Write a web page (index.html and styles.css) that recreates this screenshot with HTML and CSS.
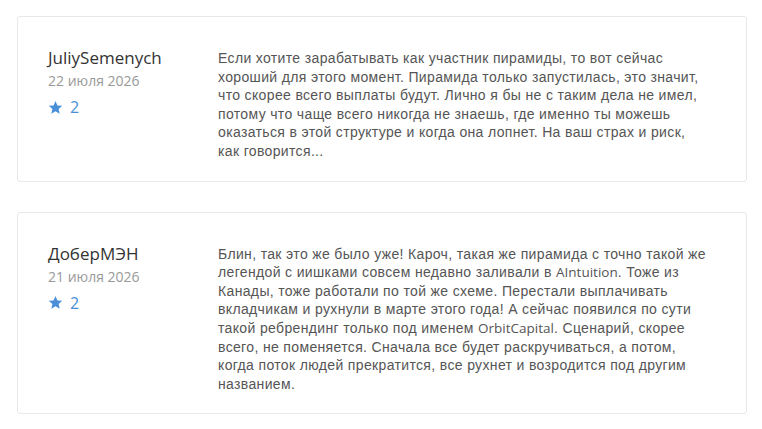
FILE: index.html
```html
<!DOCTYPE html>
<html lang="ru">
<head>
    <meta charset="UTF-8">
    <title>Отзывы</title>
    <link rel="stylesheet" href="styles.css">
</head>
<body>
    <div class="reviews">
        <div class="review">
            <div class="review-meta">
                <div class="author">JuliySemenych</div>
                <div class="date">22 июля 2026</div>
                <div class="rating">
                    <svg class="star" viewBox="0 0 24 24" width="15" height="15"><path d="M12 1.5l3.1 7.1 7.7.7-5.8 5.1 1.7 7.6L12 18l-6.7 4 1.7-7.6-5.8-5.1 7.7-.7z"/></svg>
                    <span>2</span>
                </div>
            </div>
            <p class="review-text">Если хотите зарабатывать как участник пирамиды, то вот сейчас хороший для этого момент. Пирамида только запустилась, это значит, что скорее всего выплаты будут. Лично я бы не с таким дела не имел, потому что чаще всего никогда не знаешь, где именно ты можешь оказаться в этой структуре и когда она лопнет. На ваш страх и риск, как говорится...</p>
        </div>

        <div class="review">
            <div class="review-meta">
                <div class="author">ДоберМЭН</div>
                <div class="date">21 июля 2026</div>
                <div class="rating">
                    <svg class="star" viewBox="0 0 24 24" width="15" height="15"><path d="M12 1.5l3.1 7.1 7.7.7-5.8 5.1 1.7 7.6L12 18l-6.7 4 1.7-7.6-5.8-5.1 7.7-.7z"/></svg>
                    <span>2</span>
                </div>
            </div>
            <p class="review-text">Блин, так это же было уже! Кароч, такая же пирамида с точно такой же легендой с иишками совсем недавно заливали в <span class="brand">AIntuition</span>. Тоже из Канады, тоже работали по той же схеме. Перестали выплачивать вкладчикам и рухнули в марте этого года! А сейчас появился по сути такой ребрендинг только под именем <span class="brand">OrbitCapital</span>. Сценарий, скорее всего, не поменяется. Сначала все будет раскручиваться, а потом, когда поток людей прекратится, все рухнет и возродится под другим названием.</p>
        </div>
    </div>
</body>
</html>
```

FILE: styles.css
```css
body {
    margin: 0;
    padding: 16px 15px 0 17px;
    background: #fff;
    font-family: "Open Sans", sans-serif;
}
.reviews {
    display: flex;
    flex-direction: column;
    gap: 30px;
}
.review {
    display: flex;
    border: 1px solid #e8e8e8;
    border-radius: 3px;
    padding: 30px 30px 20px 30px;
}
.review-meta {
    width: 170px;
    flex-shrink: 0;
}
.author {
    font-size: 17px;
    line-height: 22px;
    color: #333;
}
.date {
    margin-top: 2px;
    font-size: 14px;
    line-height: 20px;
    color: #999;
}
/* rating with a star */
.rating {
    margin-top: 5px;
    display: flex;
    align-items: center;
    gap: 7px;
    color: #4a90d9;
    font-size: 16px;
}
.star {
    fill: #4a90d9;
}
.review-text {
    margin: 2px 0 0;
    width: 492px;
    font-family: "Liberation Sans", Arial, sans-serif;
    font-size: 14px;
    line-height: 18.6px;
    letter-spacing: 0.35px;
    color: #555;
}
.brand {
    font-family: "Open Sans", sans-serif;
    font-size: 13.5px;
    line-height: 1;
    letter-spacing: 0;
}
```
